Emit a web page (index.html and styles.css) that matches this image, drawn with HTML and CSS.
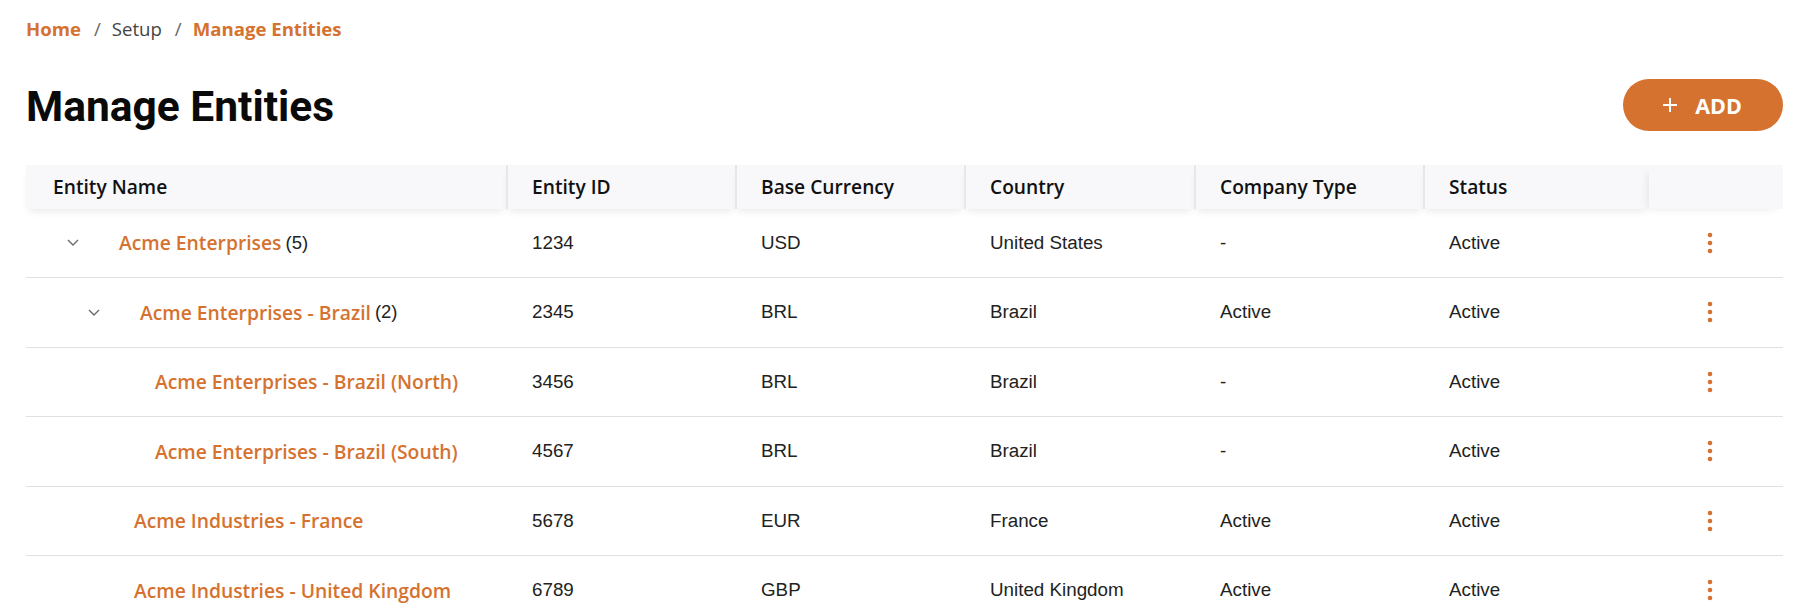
FILE: index.html
```html
<!DOCTYPE html>
<html lang="en">
<head>
    <meta charset="UTF-8">
    <meta name="viewport" content="width=device-width, initial-scale=1.0">
    <title>Manage Entities</title>
    <link rel="stylesheet" href="styles.css">
</head>
<body>
    <nav class="breadcrumb" aria-label="Breadcrumb">
        <a href="#" class="crumb-link">Home</a>
        <span class="crumb-sep">/</span>
        <span class="crumb-text">Setup</span>
        <span class="crumb-sep">/</span>
        <a href="#" class="crumb-link">Manage Entities</a>
    </nav>

    <header class="page-header">
        <h1>Manage Entities</h1>
        <button class="add-button" type="button">
            <svg width="16" height="16" viewBox="0 0 16 16" aria-hidden="true">
                <path d="M8 1v14M1 8h14" stroke="#fff" stroke-width="2" fill="none"/>
            </svg>
            <span>ADD</span>
        </button>
    </header>

    <table class="entity-table">
        <colgroup>
            <col class="col-name">
            <col class="col-std">
            <col class="col-std">
            <col class="col-wide">
            <col class="col-std">
            <col class="col-status">
            <col class="col-actions">
        </colgroup>
        <thead>
            <tr>
                <th>Entity Name</th>
                <th>Entity ID</th>
                <th>Base Currency</th>
                <th>Country</th>
                <th>Company Type</th>
                <th>Status</th>
                <th class="actions-head"></th>
            </tr>
        </thead>
        <tbody>
            <tr>
                <td>
                    <div class="tree-cell lvl-0">
                        <span class="tree-toggle"><svg width="12" height="7" viewBox="0 0 12 7"><path d="M1 1l5 5 5-5" stroke="#6b6b6b" stroke-width="1.4" fill="none"/></svg></span>
                        <a href="#" class="entity-link">Acme Enterprises</a><span class="child-count">(5)</span>
                    </div>
                </td>
                <td>1234</td>
                <td>USD</td>
                <td>United States</td>
                <td>-</td>
                <td>Active</td>
                <td class="actions-cell"><button class="kebab" type="button" aria-label="More actions"><svg width="6" height="22" viewBox="0 0 6 22"><circle cx="3" cy="3" r="2.3"/><circle cx="3" cy="11" r="2.3"/><circle cx="3" cy="19" r="2.3"/></svg></button></td>
            </tr>
            <tr>
                <td>
                    <div class="tree-cell lvl-1">
                        <span class="tree-toggle"><svg width="12" height="7" viewBox="0 0 12 7"><path d="M1 1l5 5 5-5" stroke="#6b6b6b" stroke-width="1.4" fill="none"/></svg></span>
                        <a href="#" class="entity-link">Acme Enterprises - Brazil</a><span class="child-count">(2)</span>
                    </div>
                </td>
                <td>2345</td>
                <td>BRL</td>
                <td>Brazil</td>
                <td>Active</td>
                <td>Active</td>
                <td class="actions-cell"><button class="kebab" type="button" aria-label="More actions"><svg width="6" height="22" viewBox="0 0 6 22"><circle cx="3" cy="3" r="2.3"/><circle cx="3" cy="11" r="2.3"/><circle cx="3" cy="19" r="2.3"/></svg></button></td>
            </tr>
            <tr>
                <td>
                    <div class="tree-cell lvl-2 leaf">
                        <a href="#" class="entity-link">Acme Enterprises - Brazil (North)</a>
                    </div>
                </td>
                <td>3456</td>
                <td>BRL</td>
                <td>Brazil</td>
                <td>-</td>
                <td>Active</td>
                <td class="actions-cell"><button class="kebab" type="button" aria-label="More actions"><svg width="6" height="22" viewBox="0 0 6 22"><circle cx="3" cy="3" r="2.3"/><circle cx="3" cy="11" r="2.3"/><circle cx="3" cy="19" r="2.3"/></svg></button></td>
            </tr>
            <tr>
                <td>
                    <div class="tree-cell lvl-2 leaf">
                        <a href="#" class="entity-link">Acme Enterprises - Brazil (South)</a>
                    </div>
                </td>
                <td>4567</td>
                <td>BRL</td>
                <td>Brazil</td>
                <td>-</td>
                <td>Active</td>
                <td class="actions-cell"><button class="kebab" type="button" aria-label="More actions"><svg width="6" height="22" viewBox="0 0 6 22"><circle cx="3" cy="3" r="2.3"/><circle cx="3" cy="11" r="2.3"/><circle cx="3" cy="19" r="2.3"/></svg></button></td>
            </tr>
            <tr>
                <td>
                    <div class="tree-cell lvl-1 leaf">
                        <a href="#" class="entity-link">Acme Industries - France</a>
                    </div>
                </td>
                <td>5678</td>
                <td>EUR</td>
                <td>France</td>
                <td>Active</td>
                <td>Active</td>
                <td class="actions-cell"><button class="kebab" type="button" aria-label="More actions"><svg width="6" height="22" viewBox="0 0 6 22"><circle cx="3" cy="3" r="2.3"/><circle cx="3" cy="11" r="2.3"/><circle cx="3" cy="19" r="2.3"/></svg></button></td>
            </tr>
            <tr>
                <td>
                    <div class="tree-cell lvl-1 leaf">
                        <a href="#" class="entity-link">Acme Industries - United Kingdom</a>
                    </div>
                </td>
                <td>6789</td>
                <td>GBP</td>
                <td>United Kingdom</td>
                <td>Active</td>
                <td>Active</td>
                <td class="actions-cell"><button class="kebab" type="button" aria-label="More actions"><svg width="6" height="22" viewBox="0 0 6 22"><circle cx="3" cy="3" r="2.3"/><circle cx="3" cy="11" r="2.3"/><circle cx="3" cy="19" r="2.3"/></svg></button></td>
            </tr>
        </tbody>
    </table>
</body>
</html>
```

FILE: styles.css
```css
body {
    margin: 0;
    padding: 16px 21px 0 26px;
    font-family: "Open Sans", "Noto Sans", sans-serif;
    background-color: #fff;
    color: #222;
}
.breadcrumb {
    display: flex;
    align-items: center;
    font-size: 18.6px;
    line-height: 24px;
    height: 24px;
    margin-top: 1px;
}
.crumb-link {
    color: #d5722f;
    font-weight: 700;
    text-decoration: none;
}
.crumb-text {
    color: #444;
}
.crumb-sep {
    color: #666;
    margin: 0 11px 0 13px;
}
.page-header {
    display: flex;
    align-items: center;
    justify-content: space-between;
    height: 52px;
    margin: 38px 0 34px;
}
.page-header h1 {
    margin: 4px 0 0;
    font-family: Roboto, "Liberation Sans", sans-serif;
    font-size: 42.5px;
    font-weight: 700;
    line-height: 50px;
    color: #0a0a0a;
}
.add-button {
    display: flex;
    align-items: center;
    justify-content: center;
    gap: 17px;
    width: 160px;
    height: 52px;
    padding: 0 2px 0 0;
    border: none;
    border-radius: 26px;
    background-color: #d5722f;
    color: #fff;
    font-family: "Open Sans", "Noto Sans", sans-serif;
    font-size: 21.5px;
    font-weight: 700;
    cursor: pointer;
}
.entity-table {
    width: 1757px;
    table-layout: fixed;
    border-collapse: separate;
    border-spacing: 0;
}
.col-name { width: 480px; }
.col-std { width: 229px; }
.col-wide { width: 230px; }
.col-status { width: 226px; }
.col-actions { width: 134px; }
.entity-table th {
    height: 43.5px;
    padding: 0 24px;
    background-color: #f8f8fa;
    text-align: left;
    font-size: 19.2px;
    font-weight: 600;
    color: #111;
    box-shadow: 0 5px 8px -3px rgba(0, 0, 0, 0.09);
    box-sizing: border-box;
}
.entity-table th:first-child {
    padding-left: 27px;
}
.entity-table th + th {
    border-left: 2px solid #e6e6eb;
}
.entity-table th.actions-head {
    border-left: none;
    box-shadow: -5px 4px 8px -4px rgba(0, 0, 0, 0.09);
}
.entity-table td {
    height: 69.5px;
    padding: 0 24px 0 26px;
    border-bottom: 1px solid #e0e0e0;
    font-family: "Liberation Sans", Arial, sans-serif;
    font-size: 18.8px;
    color: #222;
    vertical-align: middle;
    box-sizing: border-box;
}
.entity-table td:first-child {
    padding-left: 25px;
}
.tree-cell {
    display: flex;
    align-items: center;
}
.tree-cell.lvl-1 { padding-left: 21px; }
.tree-cell.lvl-2 { padding-left: 42px; }
.tree-cell.leaf .entity-link {
    margin-left: 62px;
}
.tree-toggle {
    display: inline-flex;
    align-items: center;
    justify-content: center;
    width: 24px;
    height: 24px;
    margin: 0 34px 0 10px;
}
.entity-link {
    font-family: "Open Sans", "Noto Sans", sans-serif;
    font-size: 19.3px;
    font-weight: 600;
    color: #d5722f;
    text-decoration: none;
}
.child-count {
    margin-left: 4px;
    font-size: 18.5px;
    color: #222;
}
.entity-table td.actions-cell {
    padding: 0 12px 0 0;
    text-align: center;
    line-height: 0;
}
.kebab {
    display: inline-flex;
    padding: 0;
    border: none;
    background: none;
    fill: #d5722f;
    cursor: pointer;
}
```
